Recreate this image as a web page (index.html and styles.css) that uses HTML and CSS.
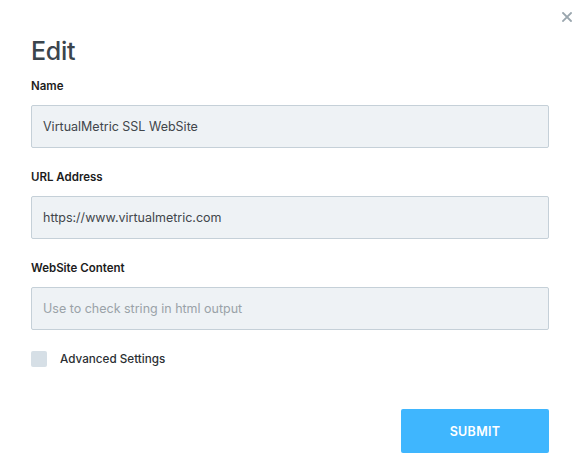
FILE: index.html
```html
<!DOCTYPE html>
<html>
<head>
<meta charset="utf-8">
<link rel="stylesheet" href="styles.css">
</head>
<body>
<div class="modal">
  <button class="close" aria-label="Close">
    <svg width="10" height="10" viewBox="0 0 10 10"><path d="M1 1L9 9M9 1L1 9" stroke="#9aa6ae" stroke-width="1.8" stroke-linecap="square"/></svg>
  </button>
  <h1 class="title">Edit</h1>
  <form class="form">
    <div class="field">
      <label class="label">Name</label>
      <div class="input">VirtualMetric SSL WebSite</div>
    </div>
    <div class="field">
      <label class="label">URL Address</label>
      <div class="input">https://www.virtualmetric.com</div>
    </div>
    <div class="field">
      <label class="label">WebSite Content</label>
      <div class="input placeholder">Use to check string in html output</div>
    </div>
    <div class="check-row">
      <span class="checkbox"></span>
      <span class="check-label">Advanced Settings</span>
    </div>
    <div class="actions">
      <button type="button" class="submit">SUBMIT</button>
    </div>
  </form>
</div>
</body>
</html>
```
FILE: styles.css
```css
html, body {
  margin: 0;
  padding: 0;
  background: #ffffff;
}
body {
  font-family: Inter, "Noto Sans", "Liberation Sans", sans-serif;
  width: 584px;
  height: 467px;
  overflow: hidden;
}
.modal {
  position: relative;
  padding: 0 35px 0 31px;
}
.close {
  position: absolute;
  top: 12px;
  left: 562px;
  width: 10px;
  height: 10px;
  padding: 0;
  border: 0;
  background: none;
  display: block;
}
.close svg { display: block; }
.title {
  margin: 0;
  padding-top: 37px;
  font-size: 25px;
  line-height: 29px;
  font-weight: 500;
  color: #3b454d;
  letter-spacing: -0.3px;
}
.form {
  display: flex;
  flex-direction: column;
  margin-top: 12px;
}
.field {
  display: flex;
  flex-direction: column;
}
.field + .field {
  margin-top: 21px;
}
.label {
  font-size: 11.5px;
  line-height: 16px;
  font-weight: 600;
  color: #1c1c1c;
  margin-bottom: 11px;
}
.input {
  box-sizing: border-box;
  height: 43px;
  border: 1px solid #c5d0d8;
  background: #eef2f5;
  border-radius: 2px;
  padding: 0 11px;
  display: flex;
  align-items: center;
  font-size: 12.5px;
  color: #41464b;
}
.input.placeholder {
  color: #9aa2a8;
}
.check-row {
  display: flex;
  align-items: center;
  margin-top: 21px;
  height: 16px;
}
.checkbox {
  width: 16px;
  height: 16px;
  background: #d6dfe6;
  border-radius: 2px;
}
.check-label {
  margin-left: 13px;
  font-size: 11.7px;
  font-weight: 500;
  color: #2b2f33;
}
.actions {
  display: flex;
  justify-content: flex-end;
  margin-top: 42px;
}
.submit {
  width: 148px;
  height: 44px;
  border: 0;
  border-radius: 2px;
  background: #3fb6fe;
  color: #ffffff;
  font-family: Inter, "Noto Sans", sans-serif;
  font-size: 12.5px;
  font-weight: 600;
  letter-spacing: 0.3px;
}
```
